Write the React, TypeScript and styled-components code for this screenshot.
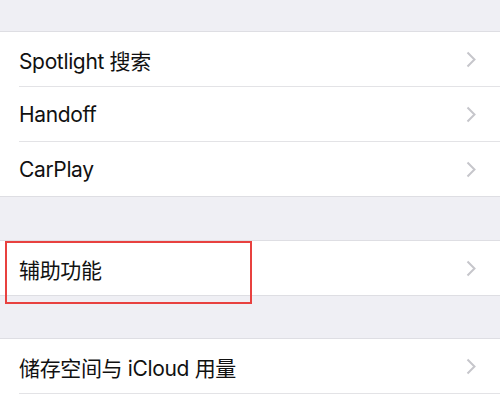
import React from 'react';
import styled, { createGlobalStyle } from 'styled-components';

const GlobalStyle = createGlobalStyle`
  html, body {
    margin: 0;
    padding: 0;
    background: #efeff4;
  }
  body {
    font-family: Inter, "Noto Sans CJK SC", sans-serif;
    -webkit-font-smoothing: antialiased;
  }
`;

const Page = styled.div`
  width: 500px;
  height: 410px;
  overflow: hidden;
  background: #efeff4;
  padding-top: 31px;
  box-sizing: border-box;
`;

const Section = styled.div<{ gap?: number }>`
  position: relative;
  background: #fff;
  border-top: 1px solid #dedee3;
  border-bottom: 1px solid #dedee3;
  margin-bottom: ${props => props.gap ?? 43}px;
`;

const Row = styled.div<{ last?: boolean }>`
  position: relative;
  display: flex;
  align-items: center;
  justify-content: space-between;
  height: 54px;
  padding: 0 23px 0 19px;
  margin-bottom: ${props => (props.last ? 0 : 1)}px;
  &::after {
    content: '';
    display: ${props => (props.last ? 'none' : 'block')};
    position: absolute;
    left: 19px;
    right: 0;
    bottom: -1px;
    height: 1px;
    background: #e3e3e6;
  }
`;

const Label = styled.span`
  font-size: 21px;
  color: #111;
  letter-spacing: -0.35px;
  padding-top: 1px;
`;

const Highlight = styled.div`
  position: absolute;
  left: 5px;
  top: 0;
  width: 247px;
  height: 63px;
  border: 2px solid #e8413f;
  box-sizing: border-box;
  pointer-events: none;
`;

const Chevron = () => (
  <svg width="11" height="17" viewBox="0 0 11 17">
    <path d="M1.5 1.5 L8.5 8.5 L1.5 15.5" fill="none" stroke="#c6c6cb" strokeWidth="2" />
  </svg>
);

const Item: React.FC<{ label: string; last?: boolean }> = ({ label, last }) => (
  <Row last={last}>
    <Label>{label}</Label>
    <Chevron />
  </Row>
);

export default function App() {
  return (
    <Page>
      <GlobalStyle />
      <Section gap={43}>
        <Item label="Spotlight 搜索" />
        <Item label="Handoff" />
        <Item label="CarPlay" last />
      </Section>
      <Section gap={42}>
        <Item label="辅助功能" last />
        <Highlight />
      </Section>
      <Section>
        <Item label="储存空间与 iCloud 用量" />
        <Item label="" last />
      </Section>
    </Page>
  );
}
